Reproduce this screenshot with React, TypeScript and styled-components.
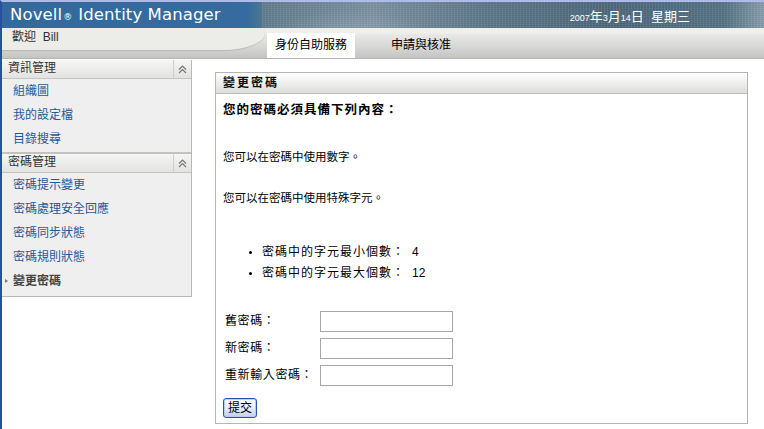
import styled, { createGlobalStyle } from 'styled-components';

const GlobalStyle = createGlobalStyle`
  html, body {
    margin: 0;
    padding: 0;
    background: #ffffff;
  }
  body {
    font-family: "Liberation Sans", "Noto Sans CJK TC", sans-serif;
    font-size: 12px;
    color: #000;
  }
`;

const CJK = `"Liberation Sans", "Noto Sans CJK TC", sans-serif`;

const Frame = styled.div`
  min-height: 427px;
  border-top: 2px solid #aebbe8;
  border-left: 2px solid #2a4f9f;
  display: flex;
  flex-direction: column;
`;

const Banner = styled.div`
  height: 26px;
  display: flex;
`;

const TitleBlock = styled.div`
  width: 260px;
  background: linear-gradient(to right, #336a9e 0%, #356b9e 94%, #4d7690 100%);
  color: #fff;
  font-family: "DejaVu Sans", sans-serif;
  font-size: 16.5px;
  line-height: 26px;
  padding-left: 8px;
  box-sizing: border-box;
  white-space: nowrap;
  letter-spacing: 0.1px;
`;

const Reg = styled.span`
  font-size: 9px;
  margin: 0 6px 0 1px;
`;

const Texture = styled.div`
  flex: 1;
  display: flex;
  justify-content: flex-end;
  align-items: center;
  padding-right: 74px;
  background:
    repeating-linear-gradient(90deg, rgba(255, 255, 255, 0.07) 0 1px, transparent 1px 3px),
    repeating-linear-gradient(0deg, rgba(0, 0, 0, 0.07) 0 1px, transparent 1px 2px),
    radial-gradient(ellipse 120px 40px at 90px 36px, rgba(160, 180, 190, 0.55), transparent 70%),
    linear-gradient(to right, #647f8f 0%, #7e94a3 22%, #5f7a8b 45%, #4f6b7d 70%, #587586 92%, #8aa0ad 100%);
`;

const DateText = styled.div`
  color: #fff;
  font-family: ${CJK};
  font-size: 13px;
  white-space: nowrap;
`;

const Small = styled.span`
  font-size: 9px;
`;

const NavBar = styled.div`
  height: 30px;
  display: flex;
  background: linear-gradient(to bottom, #efefed 0, #efefed 5px, #e9e9e7 6px, #d8d8d6 60%, #c4c4c2 100%);
  border-bottom: 1px solid #b5b5b3;
`;

const Welcome = styled.div`
  width: 263px;
  height: 22px;
  background: #ecece9;
  border-bottom-right-radius: 42px 17px;
  box-shadow: 0 1px 1px rgba(0, 0, 0, 0.12);
  padding-left: 10px;
  box-sizing: border-box;
  line-height: 19px;
  font-family: ${CJK};
  color: #333;
  font-size: 12px;
  flex-shrink: 0;
`;

const Tabs = styled.div`
  display: flex;
  align-items: flex-end;
  gap: 28px;
  margin-left: 2px;
`;

const Tab = styled.div<{ $active?: boolean }>`
  height: 25px;
  line-height: 25px;
  padding: 0 8px;
  font-family: ${CJK};
  font-size: 12px;
  color: #000;
  background: ${({ $active }) => ($active ? '#ffffff' : 'transparent')};
`;

const Body = styled.div`
  flex: 1;
  display: flex;
  align-items: flex-start;
  padding-top: 1px;
`;

const Sidebar = styled.div`
  width: 189px;
  background: #efefef;
  border-right: 1px solid #b8b8b8;
  border-bottom: 1px solid #b8b8b8;
  padding-bottom: 2px;
  flex-shrink: 0;
`;

const Section = styled.div<{ $first?: boolean }>`
  border-top: ${({ $first }) => ($first ? '0' : '2px solid #c2c2c2')};
`;

const SectionHead = styled.div`
  height: 18px;
  display: flex;
  align-items: stretch;
  background: linear-gradient(to bottom, #f6f6f4, #e2e2e0);
  border-bottom: 1px solid #c4c4c4;
`;

const SectionTitle = styled.div`
  flex: 1;
  padding-left: 6px;
  line-height: 17px;
  font-family: ${CJK};
  font-size: 12px;
  color: #333;
`;

const Collapse = styled.div`
  width: 17px;
  border-left: 1px solid #cfcfcf;
  display: flex;
  align-items: center;
  justify-content: center;
`;

const Links = styled.div`
  padding-bottom: 1px;
`;

const NavLink = styled.div<{ $current?: boolean }>`
  position: relative;
  height: 24px;
  line-height: 24px;
  padding-left: 11px;
  font-family: ${CJK};
  font-size: 12px;
  color: ${({ $current }) => ($current ? '#444' : '#1f5a9a')};
  font-weight: ${({ $current }) => ($current ? 'bold' : 'normal')};
`;

const Marker = styled.span`
  position: absolute;
  left: 3px;
  top: 10px;
  width: 0;
  height: 0;
  border-top: 2px solid transparent;
  border-bottom: 2px solid transparent;
  border-left: 3px solid #777;
`;

const Main = styled.div`
  flex: 1;
  padding: 12px 16px 0 23px;
`;

const Panel = styled.div`
  border: 1px solid #b5b5b5;
  height: 352px;
  box-sizing: border-box;
`;

const PanelHead = styled.div`
  height: 20px;
  line-height: 20px;
  padding-left: 7px;
  background: linear-gradient(to bottom, #ffffff, #dcdedb);
  border-bottom: 1px solid #bdbdbd;
  font-family: ${CJK};
  font-weight: bold;
  font-size: 12px;
  letter-spacing: 2px;
  color: #111;
`;

const PanelBody = styled.div`
  padding: 8px 7px 0;
`;

const Lead = styled.div`
  line-height: 16px;
  font-family: ${CJK};
  font-weight: bold;
  font-size: 12.5px;
  letter-spacing: 1px;
`;

const Para = styled.div<{ $gap: number }>`
  margin-top: ${({ $gap }) => $gap}px;
  line-height: 16px;
  font-family: ${CJK};
  font-size: 11.5px;
`;

const RuleList = styled.ul`
  margin: 36px 0 0;
  padding-left: 39px;
  list-style: disc;
`;

const Rule = styled.li`
  line-height: 21px;
  font-family: ${CJK};
  font-size: 12px;
  letter-spacing: 1px;
  &::marker {
    font-size: 10px;
  }
`;

const RuleValue = styled.span`
  margin-left: 7px;
  letter-spacing: 0;
`;

const Form = styled.div`
  margin-top: 27px;
  padding-left: 2px;
  display: grid;
  grid-template-columns: 95px 133px;
  row-gap: 6px;
  align-items: center;
`;

const FieldLabel = styled.label`
  font-family: ${CJK};
  font-size: 12px;
  letter-spacing: 0.6px;
  line-height: 21px;
`;

const Field = styled.input`
  height: 21px;
  width: 133px;
  box-sizing: border-box;
  border: 1px solid #a7a7a7;
  margin: 0;
  padding: 0 3px;
  background: #fff;
`;

const Submit = styled.button`
  margin-top: 12px;
  width: 34px;
  height: 20px;
  padding: 0;
  border: 1px solid #2a50a8;
  border-radius: 3px;
  background: linear-gradient(to bottom, #ffffff 0%, #eef2fa 40%, #c2d0ec 100%);
  box-shadow: inset 0 0 0 1px #b9cbf0;
  font-family: ${CJK};
  font-size: 12px;
  color: #000;
  line-height: 16px;
`;

const Chevrons = () => (
  <svg width="9" height="9" viewBox="0 0 9 9">
    <path d="M1 4.5 L4.5 1 L8 4.5 M1 8 L4.5 4.5 L8 8" fill="none" stroke="#777" strokeWidth="1.2" />
  </svg>
);

const sections = [
  { title: '資訊管理', links: ['組織圖', '我的設定檔', '目錄搜尋'] },
  { title: '密碼管理', links: ['密碼提示變更', '密碼處理安全回應', '密碼同步狀態', '密碼規則狀態', '變更密碼'] },
];

const fields = ['舊密碼：', '新密碼：', '重新輸入密碼：'];

export default function App() {
  return (
    <>
      <GlobalStyle />
      <Frame>
        <Banner>
          <TitleBlock>
            Novell<Reg>®</Reg>Identity Manager
          </TitleBlock>
          <Texture>
            <DateText>
              <Small>2007</Small>年<Small>3</Small>月<Small>14</Small>日&nbsp; 星期三
            </DateText>
          </Texture>
        </Banner>
        <NavBar>
          <Welcome>歡迎&nbsp; Bill</Welcome>
          <Tabs>
            <Tab $active>身份自助服務</Tab>
            <Tab>申請與核准</Tab>
          </Tabs>
        </NavBar>
        <Body>
          <Sidebar>
            {sections.map((s, i) => (
              <Section key={s.title} $first={i === 0}>
                <SectionHead>
                  <SectionTitle>{s.title}</SectionTitle>
                  <Collapse>
                    <Chevrons />
                  </Collapse>
                </SectionHead>
                <Links>
                  {s.links.map((l) => {
                    const current = l === '變更密碼';
                    return (
                      <NavLink key={l} $current={current}>
                        {current && <Marker />}
                        {l}
                      </NavLink>
                    );
                  })}
                </Links>
              </Section>
            ))}
          </Sidebar>
          <Main>
            <Panel>
              <PanelHead>變更密碼</PanelHead>
              <PanelBody>
                <Lead>您的密碼必須具備下列內容：</Lead>
                <Para $gap={31}>您可以在密碼中使用數字。</Para>
                <Para $gap={25}>您可以在密碼中使用特殊字元。</Para>
                <RuleList>
                  <Rule>
                    密碼中的字元最小個數：<RuleValue>4</RuleValue>
                  </Rule>
                  <Rule>
                    密碼中的字元最大個數：<RuleValue>12</RuleValue>
                  </Rule>
                </RuleList>
                <Form>
                  {fields.map((f) => [
                    <FieldLabel key={f + 'l'}>{f}</FieldLabel>,
                    <Field key={f + 'i'} type="password" />,
                  ])}
                </Form>
                <Submit>提交</Submit>
              </PanelBody>
            </Panel>
          </Main>
        </Body>
      </Frame>
    </>
  );
}
